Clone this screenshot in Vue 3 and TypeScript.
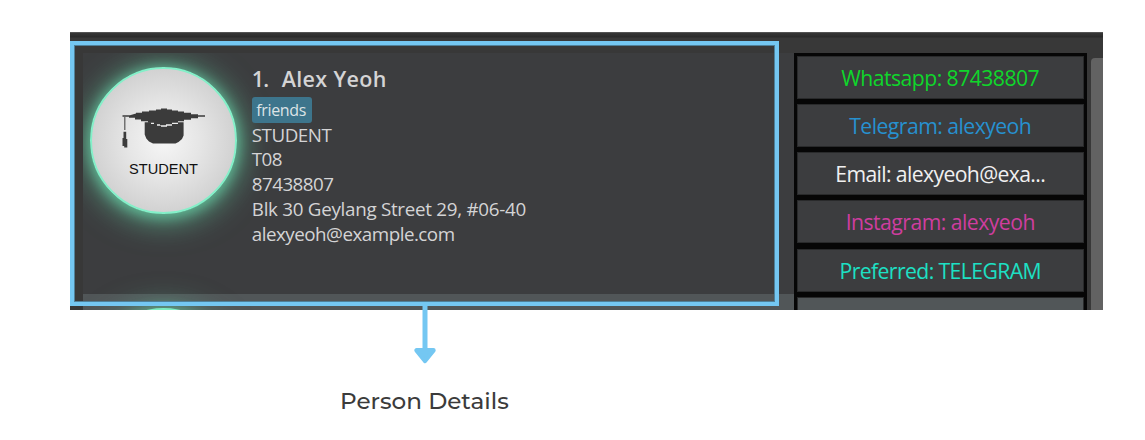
<script setup lang="ts">
interface Line {
  text: string
  cls: string
}

const details: Line[] = [
  { text: 'STUDENT', cls: 'role' },
  { text: 'T08', cls: 'group' },
  { text: '87438807', cls: 'phone' },
  { text: 'Blk 30 Geylang Street 29, #06-40', cls: 'address' },
  { text: 'alexyeoh@example.com', cls: 'mail' },
]

const contacts: Line[] = [
  { text: 'Whatsapp: 87438807', cls: 'whatsapp' },
  { text: 'Telegram: alexyeoh', cls: 'telegram' },
  { text: 'Email: alexyeoh@exa...', cls: 'email' },
  { text: 'Instagram: alexyeoh', cls: 'instagram' },
  { text: 'Preferred: TELEGRAM', cls: 'preferred' },
  { text: '', cls: 'next' },
]
</script>

<template>
  <main class="page">
    <section class="window">
      <div class="titlebar"></div>
      <div class="body">
        <div class="list">
          <article class="person">
            <div class="avatar">
              <svg viewBox="115 95 100 90" width="100" height="90">
                <path fill="#3b3b3b" d="M122.5 115.2H130L136 113.4V112.8H142V111.5H149V110.4H156V109.4H161V108.4H167V109.4H172V110.4H178V111.5H184V112.8H191V114.2H198V115.2H205V116.8H198V118.2H191V119.8H184V121.2H178V122.8H172V124.3H166V125.3H160V124.3H154V122.8H148V121.2H141V119.4H135V117.8H129V116.8H122.5Z" />
                <path fill="#3b3b3b" d="M144.7 122.3H151V124H157V125.8H161V126.8H167V125.8H172V124H178V122.3H183.6V135.5L182 139L178.5 142L175.5 143.5H153L149 141.5L146.3 138.5L144.7 134.5Z" />
                <path fill="none" stroke="#555" stroke-width="1.2" d="M124.8 117V130" />
                <path fill="#3b3b3b" d="M123.5 131.7H126.2V139H127.3V147.5H124.2V146H122.5V138H123.5Z" />
                <text x="129" y="174" textLength="69" lengthAdjust="spacing">STUDENT</text>
              </svg>
            </div>
            <div class="info">
              <h1><span class="index">1.</span><span>Alex Yeoh</span></h1>
              <span class="tag">friends</span>
              <p v-for="line in details" :key="line.cls"><span :class="line.cls">{{ line.text }}</span></p>
            </div>
          </article>
          <div class="next-person"><div class="next-avatar"></div></div>
        </div>
        <div class="contacts">
          <div v-for="c in contacts" :key="c.cls" class="contact" :class="c.cls">
            <span>{{ c.text }}</span>
          </div>
        </div>
        <div class="scroll"><div class="thumb"></div></div>
      </div>
    </section>
    <div class="frame"></div>
    <svg class="arrow" width="24" height="61" viewBox="0 0 24 61">
      <path d="M12 0V47" stroke="#74c7f2" stroke-width="5" />
      <path d="M3.5 45.3H20.5L12 56Z" fill="#74c7f2" stroke="#74c7f2" stroke-width="4.4" stroke-linejoin="round" />
    </svg>
    <div class="caption">Person Details</div>
  </main>
</template>

<style>
body {
  margin: 0;
  background: #fff;
}
</style>

<style scoped>
.page {
  position: relative;
  box-sizing: border-box;
  width: 1145px;
  height: 440px;
  padding: 32px 0 0 70px;
  overflow: hidden;
  font-family: "Open Sans", "Noto Sans", sans-serif;
}
.window {
  display: flex;
  flex-direction: column;
  width: 1033px;
  height: 278px;
  overflow: hidden;
  background: #383838;
}
.titlebar {
  flex: none;
  height: 6px;
  background: linear-gradient(#626262 0, #353535 1.5px, #2a2a2a 5px, #383838);
}
.body {
  display: flex;
  flex: 1;
  padding: 14.5px 0 0 13px;
}
.list {
  width: 711px;
  flex: none;
}
.person {
  display: flex;
  height: 241.5px;
  background: #3c3d3f;
  overflow: hidden;
}
.avatar {
  box-sizing: border-box;
  flex: none;
  display: flex;
  align-items: center;
  justify-content: center;
  width: 147px;
  height: 147px;
  margin: 14.3px 0 0 7.2px;
  border: 2px solid #84f0c9;
  border-radius: 50%;
  background: radial-gradient(circle closest-side at 50% 50%, #f6f6f6 0, #e6e6e6 50%, #d2d2d2 100%);
  box-shadow: 0 2px 12px 2px rgba(105, 215, 170, .6), 0 3px 30px 5px rgba(105, 210, 168, .65);
}
.avatar svg {
  margin: 0 0 0 2px;
}
.avatar text {
  font-family: "Liberation Sans", Arial, sans-serif;
  font-size: 14.6px;
  fill: #111;
}
.info {
  padding: 12px 0 0 14.6px;
  color: #d4d4d5;
}
h1 {
  display: flex;
  gap: 13.5px;
  margin: 0;
  height: 32px;
  font-size: 21.5px;
  line-height: 27px;
  font-weight: 600;
  letter-spacing: .35px;
  white-space: nowrap;
}
h1 .index {
  letter-spacing: -.9px;
}
.tag {
  display: block;
  box-sizing: border-box;
  width: 60px;
  height: 26px;
  padding-left: 4.5px;
  border-radius: 3px;
  background: #3d758c;
  color: #dce3e6;
  font-size: 16px;
  letter-spacing: -.35px;
  line-height: 26px;
}
p {
  margin: 0;
  height: 24.9px;
  font-size: 18.8px;
  line-height: 25px;
  white-space: nowrap;
}
.role { letter-spacing: -.47px; }
.group { letter-spacing: -.6px; }
.phone { letter-spacing: -.54px; }
.address { letter-spacing: -.28px; }
.mail { letter-spacing: -.5px; }
.next-person {
  display: flex;
  height: 20px;
  background: #515658;
}
.next-avatar {
  flex: none;
  width: 147px;
  height: 147px;
  margin: 14px 0 0 7px;
  border-radius: 50%;
  background: #7eedc3;
  box-shadow: 0 2px 12px 2px rgba(105, 215, 170, .5), 0 3px 30px 5px rgba(105, 210, 168, .5);
}
.contacts {
  box-sizing: border-box;
  flex: none;
  width: 293px;
  height: 290px;
  padding: 3px 3px 0 2.5px;
  background: #060606;
}
.contact {
  box-sizing: border-box;
  height: 43px;
  margin-bottom: 5.3px;
  border: 1px solid #292a2b;
  background: #3c3d3f;
  font-size: 21.2px;
  line-height: 41px;
  text-align: center;
  white-space: nowrap;
}
.whatsapp { color: #0fd62b; letter-spacing: -.55px; }
.telegram { color: #2791cf; letter-spacing: -.54px; }
.email { color: #f0f0f0; letter-spacing: -.63px; }
.instagram { color: #cf3d9f; letter-spacing: -.53px; }
.preferred { color: #1de0c4; letter-spacing: -.6px; }
.contact.next { background: #515658; }
.scroll {
  padding: 5.5px 0 0 4px;
}
.thumb {
  width: 12px;
  height: 270px;
  border-radius: 4px 0 0 0;
  background: #626262;
}
.frame {
  position: absolute;
  box-sizing: border-box;
  left: 70px;
  top: 41px;
  width: 709px;
  height: 265px;
  border: 4px solid #74c7f2;
  box-shadow: inset 0 0 0 1px #4f8099;
}
.arrow {
  position: absolute;
  left: 412.5px;
  top: 305px;
}
.caption {
  margin: 76px 0 0 270px;
  font-family: Montserrat, Inter, sans-serif;
  font-size: 23.1px;
  line-height: 30px;
  font-weight: 500;
  color: #3b3b3b;
}
</style>
